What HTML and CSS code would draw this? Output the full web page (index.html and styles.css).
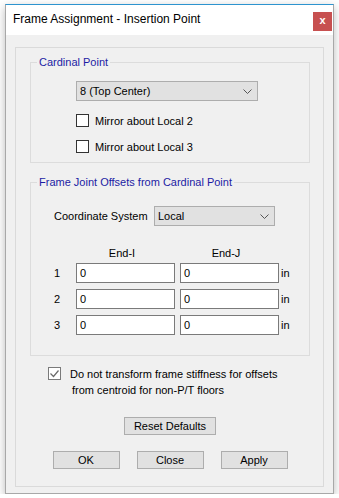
FILE: index.html
```html
<!DOCTYPE html>
<html lang="en">
<head>
  <meta charset="UTF-8">
  <title>Frame Assignment - Insertion Point</title>
  <link rel="stylesheet" href="styles.css">
</head>
<body>

<div class="pencere">
  <div class="baslik">
    <div class="baslik-yazi">Frame Assignment - Insertion Point</div>
    <div class="kapat">x</div>
  </div>

  <div class="icerik">
    <div class="panel">

      <!-- Cardinal Point -->
      <fieldset class="grup grup-kardinal">
        <legend>Cardinal Point</legend>
        <div class="secim secim-kardinal">
          <span>8 (Top Center)</span>
          <svg width="9" height="5" viewBox="0 0 9 5"><polyline points="0.5,0.5 4.5,4.5 8.5,0.5" fill="none" stroke="#555" stroke-width="1"/></svg>
        </div>
        <label class="kutu-satir">
          <span class="kutu"></span>
          <span>Mirror about Local 2</span>
        </label>
        <label class="kutu-satir ikinci">
          <span class="kutu"></span>
          <span>Mirror about Local 3</span>
        </label>
      </fieldset>

      <!-- Offsets -->
      <fieldset class="grup grup-ofset">
        <legend>Frame Joint Offsets from Cardinal Point</legend>
        <div class="koordinat">
          <span class="koordinat-etiket">Coordinate System</span>
          <div class="secim secim-koordinat">
            <span>Local</span>
            <svg width="9" height="5" viewBox="0 0 9 5"><polyline points="0.5,0.5 4.5,4.5 8.5,0.5" fill="none" stroke="#555" stroke-width="1"/></svg>
          </div>
        </div>

        <div class="tablo">
          <span></span>
          <span class="sutun">End-I</span>
          <span class="sutun">End-J</span>
          <span></span>

          <span class="no">1</span>
          <div class="kutucuk">0</div>
          <div class="kutucuk">0</div>
          <span class="birim">in</span>

          <span class="no">2</span>
          <div class="kutucuk">0</div>
          <div class="kutucuk">0</div>
          <span class="birim">in</span>

          <span class="no">3</span>
          <div class="kutucuk">0</div>
          <div class="kutucuk">0</div>
          <span class="birim">in</span>
        </div>
      </fieldset>

      <label class="rijitlik">
        <span class="kutu secili">
          <svg width="11" height="11" viewBox="0 0 11 11"><polyline points="1.5,5.5 4.5,8.5 9.5,2.5" fill="none" stroke="#6a6a6a" stroke-width="1.2"/></svg>
        </span>
        <span class="rijitlik-yazi">Do not transform frame stiffness for offsets<br><span class="ikinci-satir">from centroid for non-P/T floors</span></span>
      </label>

      <div class="reset-alani">
        <div class="buton buton-reset">Reset Defaults</div>
      </div>

      <div class="butonlar">
        <div class="buton">OK</div>
        <div class="buton">Close</div>
        <div class="buton">Apply</div>
      </div>

    </div>
  </div>
</div>

</body>
</html>
```

FILE: styles.css
```css
body {
  margin: 0;
  background: #fff;
  font-family: "Liberation Sans", Arial, sans-serif;
  font-size: 11px;
  color: #000;
}

.pencere {
  width: 327px;
  height: 488px;
  margin: 4px 0 0 5px;
  border: 1px solid #a8a8a8;
  border-top-color: #2d94cf;
  background: #f0f0f0;
  box-shadow: 0 3px 9px rgba(0, 0, 0, 0.28);
  display: flex;
  flex-direction: column;
}

.baslik {
  height: 30px;
  background: #fff;
  display: flex;
  align-items: flex-start;
}

.baslik-yazi {
  flex: 1;
  font-size: 12px;
  padding: 7px 0 0 7px;
}

.kapat {
  width: 19px;
  height: 19px;
  margin: 7px 1px 0 0;
  background: #c75050;
  color: #fff;
  font-weight: bold;
  font-size: 11px;
  line-height: 17px;
  text-align: center;
}

.icerik {
  flex: 1;
  padding: 12px 9px 6px;
  display: flex;
}

.panel {
  flex: 1;
  border: 1px solid #dadada;
  padding: 0 13px 0 14px;
}

.grup {
  margin: 0;
  padding: 0 0 9px 0;
  border: 1px solid #dcdcdc;
  min-width: 0;
}

.grup legend {
  margin-left: 6px;
  padding: 0 2px;
  color: #1c1ca4;
  line-height: 13px;
}

.grup-kardinal {
  margin-top: 8px;
}

.grup-ofset {
  margin-top: 13px;
  padding-bottom: 20px;
}

.secim {
  height: 20px;
  box-sizing: border-box;
  border: 1px solid #adadad;
  background: #e1e1e1;
  display: flex;
  align-items: center;
  justify-content: space-between;
  padding: 0 5px 0 3px;
}

.secim-kardinal {
  width: 182px;
  margin: 12px 0 0 45px;
}

.kutu-satir {
  display: flex;
  align-items: center;
  height: 13px;
  margin: 13px 0 0 45px;
}

.kutu {
  width: 13px;
  height: 13px;
  box-sizing: border-box;
  border: 1px solid #333;
  background: #fff;
  margin-right: 6px;
  flex-shrink: 0;
}

.koordinat {
  display: flex;
  align-items: center;
  margin: 17px 0 0 23px;
}

.koordinat-etiket {
  width: 100px;
}

.secim-koordinat {
  width: 121px;
}

.tablo {
  display: grid;
  grid-template-columns: 17px 99px 99px auto;
  column-gap: 5px;
  row-gap: 6px;
  margin: 21px 0 0 23px;
  align-items: center;
}

.tablo .sutun {
  text-align: center;
  padding-right: 7px;
  line-height: 13px;
  margin-bottom: -3px;
}

.kutucuk {
  height: 20px;
  box-sizing: border-box;
  border: 1px solid #7a7a7a;
  background: #fff;
  padding-left: 3px;
  line-height: 18px;
}

.birim {
  margin-left: -3px;
}

.rijitlik {
  display: flex;
  align-items: flex-start;
  margin: 11px 0 0 18px;
}

.kutu.secili {
  border-color: #7a7a7a;
  margin-right: 9px;
  display: flex;
  align-items: center;
  justify-content: center;
}

.rijitlik-yazi {
  line-height: 16px;
  margin-top: -1px;
}

.ikinci-satir {
  padding-left: 2px;
}

.reset-alani {
  display: flex;
  justify-content: center;
  margin-top: 19px;
}

.buton {
  height: 18px;
  box-sizing: border-box;
  border: 1px solid #adadad;
  background: #e1e1e1;
  text-align: center;
  line-height: 16px;
  width: 67px;
}

.buton-reset {
  width: 92px;
}

.butonlar {
  display: flex;
  justify-content: center;
  gap: 17px;
  margin-top: 16px;
}
```
